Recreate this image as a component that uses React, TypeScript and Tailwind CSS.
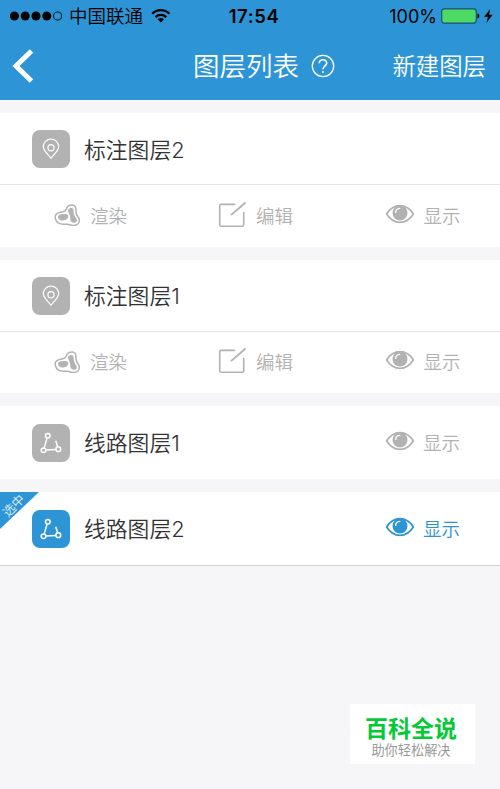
import type { ReactNode } from "react";

type Layer = {
  name: string;
  kind: "marker" | "route";
  active?: boolean;
  tools?: boolean;
};

const markerLayers: Layer[] = [
  { name: "标注图层2", kind: "marker", tools: true },
  { name: "标注图层1", kind: "marker", tools: true },
];

const routeLayers: Layer[] = [
  { name: "线路图层1", kind: "route" },
  { name: "线路图层2", kind: "route", active: true },
];

function EyeIcon() {
  return (
    <svg className="mb-1" width="30" height="20" viewBox="0 0 30 20" fill="none">
      <path d="M1.700 10C5 4.600 9.600 1.700 15 1.700S25 4.600 28.300 10C25 15.400 20.400 18.300 15 18.300S5 15.400 1.700 10Z" stroke="currentColor" strokeWidth="1.700" />
      <circle cx="15" cy="8.900" r="7.500" fill="currentColor" />
      <path d="M10.700 8.400C10.700 5.900 12.300 4.500 14.800 4.300" stroke="white" strokeWidth="1.300" strokeLinecap="round" />
    </svg>
  );
}

function PaletteIcon() {
  return (
    <svg width="27" height="23" viewBox="0 0 27 23" fill="none">
      <path
        d="M12 5.400C13 2.600 15.700 1 18.300 1.100C21 1.200 22.100 3.500 21.900 6.300C21.700 9.300 22.700 11.300 24.400 13.500C26.200 16 25.400 19.600 22.500 20.900C19.500 22.200 16.500 20.900 13.500 20.300C10.500 19.800 7.500 20.900 4.500 19.200C1.500 17.300 0.300 13 2 10.500C3.700 8.200 6 8.500 8 8C10.500 7.500 11.300 7.300 12 5.400Z"
        stroke="currentColor"
        strokeWidth="1.500"
      />
      <path d="M14.300 5.300C15.300 3.700 19.200 3 19.500 6C19.700 9.700 20.200 11.700 22.200 14.400C23.900 17 22.300 18.900 19.600 18.700C16.500 18.400 16.200 16 16.200 13.300C16.100 10.300 13.200 7.600 14.300 5.300Z" fill="currentColor" />
      <path d="M4.700 11.200C6.500 9.900 8.600 10.400 10.500 10.100C13 9.700 14.700 11 14.200 13C13.600 15.700 10.500 16.600 7.800 16.400C4.800 16.200 2.800 12.700 4.700 11.200Z" fill="currentColor" />
    </svg>
  );
}

function EditIcon() {
  return (
    <svg className="mb-0.5" width="30" height="26" viewBox="0 0 30 26" fill="none" stroke="currentColor" strokeLinecap="round">
      <path d="M16.500 2.400H3.200A1.500 1.500 0 0 0 1.700 3.900V22.700A1.500 1.500 0 0 0 3.200 24.200H24.200A1.500 1.500 0 0 0 25.700 22.700V10.500" strokeWidth="1.600" />
      <path d="M13.500 12.600L27 1" strokeWidth="1.900" />
    </svg>
  );
}

function LayerIcon({ kind, active }: { kind: Layer["kind"]; active?: boolean }) {
  return (
    <div className={`flex size-[38px] shrink-0 items-center justify-center rounded-lg text-white ${active ? "bg-[#2d95d6]" : "bg-[#b2b2b2]"}`}>
      <svg width="38" height="38" viewBox="0 0 38 38" fill="none" stroke="currentColor">
        {kind === "marker" ? (
          <g strokeWidth="1.200">
            <path d="M19 28.200C16 24.500 11.300 20.600 11.300 16.800A7.700 7.700 0 0 1 26.700 16.800C26.700 20.600 22 24.500 19 28.200Z" />
            <circle cx="19" cy="17.700" r="3.100" />
          </g>
        ) : (
          <g strokeWidth="1.500">
            <circle cx="15.800" cy="11.700" r="2.300" />
            <circle cx="11.500" cy="26.300" r="2.300" />
            <circle cx="26.300" cy="25.200" r="2.400" />
            <path d="M15.100 13.900L12.200 24.100M13.900 26L23.900 25.500M25.700 22.900L23.700 16.700" />
          </g>
        )}
      </svg>
    </div>
  );
}

function Action({ icon, label, className }: { icon: ReactNode; label: string; className?: string }) {
  return (
    <div className={`flex items-center text-[18.500px] leading-none font-[350] ${className ?? ""}`}>
      {icon}
      <span>{label}</span>
    </div>
  );
}

function LayerCard({ layer }: { layer: Layer }) {
  return (
    <section className={`relative bg-white ${layer.active ? "border-b border-[#cfd0d4]" : ""}`}>
      {layer.active && (
        <div className="absolute top-0 left-0 h-[38px] w-[39px]">
          <svg className="absolute inset-0" width="39" height="38">
            <path d="M0 0H39L0 37Z" fill="#2d95d6" />
          </svg>
          <span className="absolute top-[7px] left-px w-[26px] -rotate-45 text-center text-[12.500px] leading-[14px] font-[350] text-white/85">选中</span>
        </div>
      )}
      <div className={`flex items-center pl-8 ${layer.tools ? "h-[71px] pt-px" : "h-[73px]"}`}>
        <LayerIcon kind={layer.kind} active={layer.active} />
        <h2 className="mt-[3px] ml-3.5 text-[21.800px] leading-none font-[350] text-[#333]">{layer.name}</h2>
        {!layer.tools && (
          <Action icon={<EyeIcon />} label="显示" className={`mt-px mr-10 ml-auto gap-2 ${layer.active ? "text-[#2d95d6]" : "text-[#b2b2b2]"}`} />
        )}
      </div>
      {layer.tools && (
        <div className="flex h-[62.500px] items-center border-t border-[#e5e5e5] pr-[39.500px] pl-[54px] text-[#b2b2b2]">
          <Action icon={<PaletteIcon />} label="渲染" className="w-[164px] gap-[9px]" />
          <Action icon={<EditIcon />} label="编辑" className="gap-2" />
          <Action icon={<EyeIcon />} label="显示" className="ml-auto gap-2" />
        </div>
      )}
    </section>
  );
}

function StatusBar() {
  return (
    <div className="grid h-8 grid-cols-3 items-center pr-1.5 pl-[9px] text-[18.500px] leading-none text-black">
      <div className="flex items-center">
        <svg width="55" height="12" viewBox="0 0 55 12">
          <circle cx="5.500" cy="6" r="4.600" />
          <circle cx="16.500" cy="6" r="4.600" />
          <circle cx="27.500" cy="6" r="4.600" />
          <circle cx="38.500" cy="6" r="4.600" />
          <circle cx="49.500" cy="6" r="4.100" fill="none" stroke="black" strokeWidth="0.900" />
        </svg>
        <span className="ml-1.5 font-[350] whitespace-nowrap">中国联通</span>
        <svg className="ml-2" width="20" height="16" viewBox="0 0 20 16" fill="none" stroke="black" strokeWidth="2.300">
          <path d="M1.200 5.700C6.200 0.900 13.800 0.900 18.800 5.700M4.500 9.100C7.600 6.200 12.400 6.200 15.500 9.100" />
          <path d="M10 14.500L6.700 11.300C8.600 9.600 11.400 9.600 13.300 11.300Z" fill="black" stroke="none" />
        </svg>
      </div>
      <div className="pl-[5px] text-center font-semibold tracking-[0.600px]">17:54</div>
      <div className="flex items-center justify-end">
        <span className="mt-px text-[18px]">100%</span>
        <svg className="ml-1" width="39" height="16" viewBox="0 0 39 16">
          <rect x="0.700" y="0.900" width="34.600" height="14.200" rx="2.500" fill="#4cd964" stroke="#174f73" strokeWidth="1.200" />
          <path d="M36.500 5.500C39 6 39 10 36.500 10.500Z" />
        </svg>
        <svg className="ml-[3px]" width="11" height="16" viewBox="0 0 11 16">
          <path d="M7.200 1L1.200 8.700H5L3.400 15L9.700 6.800H6Z" />
        </svg>
      </div>
    </div>
  );
}

export default function App() {
  return (
    <main className="relative h-[789px] w-[500px] overflow-hidden bg-[#f6f6f9] font-['Inter','Noto_Sans_CJK_SC',sans-serif]">
      <header className="h-[100px] bg-[#2d95d6] text-white">
        <StatusBar />
        <nav className="flex h-[68px] items-center pr-3.5 pl-3">
          <svg width="22" height="34" viewBox="0 0 22 34" fill="none" stroke="white" strokeWidth="5">
            <path d="M19.500 2L4 17L19.500 32" />
          </svg>
          <h1 className="ml-[159px] text-[26.500px] leading-none font-[350]">图层列表</h1>
          <svg className="ml-3" width="24" height="24" viewBox="0 0 24 24" fill="none" stroke="white" strokeWidth="1.300">
            <circle cx="12" cy="12" r="10.700" />
            <path d="M8.300 9.300C8.300 4.600 15.700 4.600 15.700 9C15.700 11.700 12 12 12 15.300" strokeWidth="1.600" />
            <circle cx="12" cy="18" r="0.700" fill="white" strokeWidth="0.700" />
          </svg>
          <span className="mt-0.5 ml-auto text-[23.400px] leading-none font-[350]">新建图层</span>
        </nav>
      </header>

      <div className="flex flex-col gap-[13px] pt-[13px]">
        {[...markerLayers, ...routeLayers].map((layer) => (
          <LayerCard key={layer.name} layer={layer} />
        ))}
      </div>

      {/* Corner badge */}
      <div className="absolute top-[704px] left-[350px] flex h-[60px] w-[125px] flex-col items-center bg-white pt-3.5 pr-[3px]">
        <span className="text-[23px] leading-[23px] font-bold text-[#05c936]">百科全说</span>
        <span className="mt-0.5 text-[13.200px] leading-[14px] text-[#999]">助你轻松解决</span>
      </div>
    </main>
  );
}
